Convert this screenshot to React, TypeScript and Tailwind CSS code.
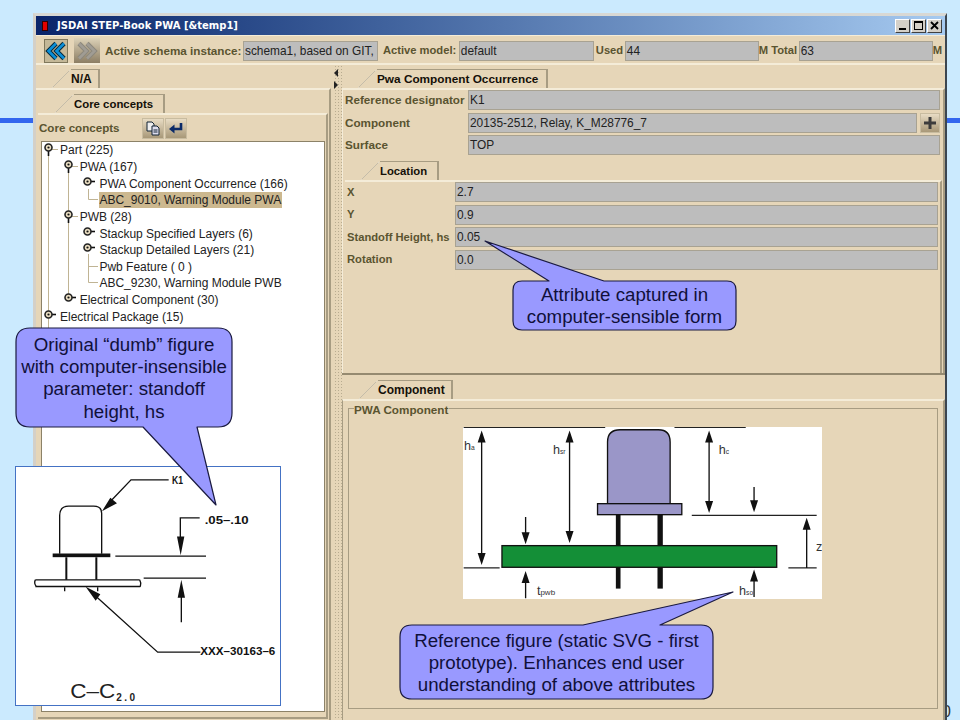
const sans = "font-['Liberation_Sans',Arial,sans-serif]";

const Tab = ({ label, width, className = "", textSize = "text-[12px]" }: { label: string; width: number; className?: string; textSize?: string }) => (
	<div className={`flex h-[19px] ${className}`} style={{ width }}>
		<svg width="19" height="19" viewBox="0 0 19 19" className="shrink-0">
			<polygon points="0,19 18,1 19,1 19,19" fill="#e6d6b8" />
			<line x1="0" y1="19" x2="18" y2="1" stroke="#fbf6ea" strokeWidth="1" />
			<line x1="0.5" y1="18.5" x2="17.5" y2="1.5" stroke="#8c8268" strokeWidth="0.5" />
		</svg>
		<div className={`flex-1 bg-[#e6d6b8] border-t border-t-[#a79c82] border-r-2 border-r-[#a79c82] pt-[1px] ${textSize} leading-[16px] font-bold text-[#141008] whitespace-nowrap`}>
			{label}
		</div>
	</div>
);

const Field = ({ value, className = "" }: { value: string; className?: string }) => (
	<div className={`h-[20px] bg-[#bdbdbd] border border-[#a8a292] pl-[1px] text-[11.9px] leading-[18px] text-[#222] whitespace-nowrap overflow-hidden ${className}`}>
		{value}
	</div>
);

const Label = ({ children, className = "" }: { children: React.ReactNode; className?: string }) => (
	<span className={`font-bold text-[#5a5430] whitespace-nowrap ${className}`}>{children}</span>
);

const NodeIcon = ({ open }: { open: boolean }) => (
	<svg width="16" height="14" viewBox="0 0 16 14" className="shrink-0">
		{open ? <line x1="4.5" y1="8" x2="4.5" y2="13" stroke="#111" strokeWidth="1.6" /> : <line x1="8" y1="4.5" x2="12" y2="4.5" stroke="#111" strokeWidth="1.6" />}
		<circle cx="4.5" cy="4.5" r="3.5" fill="#e8dcc0" stroke="#222" strokeWidth="1.6" />
		<circle cx="4.5" cy="4.5" r="1.1" fill="#111" />
	</svg>
);

const treeRows = [
	{ level: 0, icon: "open", text: "Part (225)" },
	{ level: 1, icon: "open", text: "PWA (167)" },
	{ level: 2, icon: "closed", text: "PWA Component Occurrence (166)" },
	{ level: 2, icon: "", text: "ABC_9010, Warning Module PWA", selected: true },
	{ level: 1, icon: "open", text: "PWB (28)" },
	{ level: 2, icon: "closed", text: "Stackup Specified Layers (6)" },
	{ level: 2, icon: "closed", text: "Stackup Detailed Layers (21)" },
	{ level: 2, icon: "", text: "Pwb Feature ( 0 )" },
	{ level: 2, icon: "", text: "ABC_9230, Warning Module PWB" },
	{ level: 1, icon: "closed", text: "Electrical Component (30)" },
	{ level: 0, icon: "closed", text: "Electrical Package (15)" },
];

const Tree = () => (
	<div className="relative flex-1 bg-white border border-[#8c8268] overflow-hidden">
		<svg className="absolute left-0 top-0" width="100" height="200" viewBox="0 0 100 200">
			<g stroke="#c0b494" strokeWidth="1" fill="none">
				<path d="M6.5 13V200" />
				<path d="M26.5 29V157" />
				<path d="M10 7.5H16M30 24.5H36M30 74.5H36" />
				<path d="M46.5 47V57.5H56" />
				<path d="M46.5 112V140.5H56M46.5 124.5H56" />
			</g>
		</svg>
		{treeRows.map((row) => (
			<div key={row.text} className="relative flex items-center h-[16.65px]" style={{ paddingLeft: 2 + row.level * 19.7 }}>
				{row.icon ? <NodeIcon open={row.icon === "open"} /> : <div className="w-[16px] shrink-0" />}
				<span className={`text-[12px] leading-[16px] text-[#222] whitespace-nowrap ${row.selected ? "bg-[#ccb88f] pr-[1px]" : ""}`}>{row.text}</span>
			</div>
		))}
	</div>
);

const ToolButton = ({ children, className = "" }: { children: React.ReactNode; className?: string }) => (
	<div className={`flex items-center justify-center bg-gradient-to-b from-[#e8dcc4] to-[#a89878] border border-[#c8bca0] ${className}`}>{children}</div>
);

const Chevrons = ({ color, edge, flip }: { color: string; edge: string; flip?: boolean }) => (
	<svg width="22" height="20" viewBox="0 0 22 20" className={flip ? "rotate-180" : ""}>
		<path d="M11 2.5L3.5 10l7.5 7.5M19 2.5L11.5 10l7.5 7.5" fill="none" stroke={edge} strokeWidth="4.6" />
		<path d="M11 2.5L3.5 10l7.5 7.5M19 2.5L11.5 10l7.5 7.5" fill="none" stroke={color} strokeWidth="2.6" />
	</svg>
);

const WinButton = ({ children }: { children: React.ReactNode }) => (
	<div className="w-[15px] h-[14px] flex items-center justify-center bg-[#d4d0c8] border-t border-l border-t-white border-l-white border-b border-r border-b-[#404040] border-r-[#404040]">{children}</div>
);

const ModelFigure = () => (
	<svg width="359" height="172" viewBox="368 170 1078 516" className="block bg-white" fontFamily="Liberation Sans, Arial, sans-serif">
		<g stroke="#222" strokeWidth="4" fill="none">
			<path d="M370 171H795M1003 171H1217M370 593H478M1055 435H1430M1345 593H1430" />
		</g>
		<g stroke="#111" strokeWidth="4" fill="none">
			<path d="M424 190V570M688 190V505M1107 190V415M1242 350V415M1400 593V455M556 440V510M556 684V615M1242 680V610" />
		</g>
		<g fill="#111">
			<path d="M424 180l-12 36h24zM424 584l-12-36h24zM688 180l-12 36h24zM688 518l-12-36h24zM1107 180l-12 36h24zM1107 428l-12-36h24zM1242 426l-12-36h24zM1400 442l-12 36h24zM556 522l-12-36h24zM556 602l-12 36h24zM1242 598l-12 36h24z" />
		</g>
		<rect x="827" y="430" width="14" height="225" fill="#111" />
		<rect x="952" y="430" width="16" height="225" fill="#111" />
		<rect x="485" y="526" width="825" height="65" fill="#148f37" stroke="#111" strokeWidth="4" />
		<path d="M802 400V215Q802 178 840 178H955Q990 178 990 215V400Z" fill="#9a96c8" stroke="#111" strokeWidth="4" />
		<rect x="772" y="400" width="253" height="33" fill="#9a96c8" stroke="#111" strokeWidth="4" />
		<g fill="#333" fontSize="38">
			<text x="371" y="240">h<tspan fontSize="20">a</tspan></text>
			<text x="638" y="251">h<tspan fontSize="20">sr</tspan></text>
			<text x="1136" y="251">h<tspan fontSize="20">c</tspan></text>
			<text x="1428" y="541">z</text>
			<text x="590" y="675">t<tspan fontSize="24">pwb</tspan></text>
			<text x="1197" y="673">h<tspan fontSize="20">so</tspan></text>
		</g>
	</svg>
);

const ScanFigure = () => (
	<svg width="265" height="238" viewBox="47 20 795 713" fontFamily="Liberation Sans, Arial, sans-serif">
		<g stroke="#111" fill="none" strokeWidth="4">
			<path d="M178 280V165Q178 137 205 137H280Q304 137 304 158V280" />
			<path d="M198 290V358M288 290V358" strokeWidth="6" />
			<path d="M105 358H418M105 378H420M105 358Q100 368 108 378M418 358Q424 368 420 378" strokeWidth="4" />
			<path d="M193 380V392M292 380V392" />
			<path d="M505 58H392L325 128" />
			<path d="M598 172H540V240" />
			<path d="M345 287H617M430 353H617" />
			<path d="M543 485V400" />
			<path d="M270 392L472 575H600" />
		</g>
		<rect x="157" y="279" width="173" height="11" fill="#111" />
		<path d="M305 152L330 112l20 16zM541 284l-11-56h22zM543 358l-11 54h22zM256 379l44 22-14 20z" fill="#111" />
		<g fill="#111" fontWeight="bold" fontSize="31">
			<text x="515" y="70" textLength="33" lengthAdjust="spacingAndGlyphs">K1</text>
			<text x="613" y="189" textLength="132" lengthAdjust="spacingAndGlyphs">.05–.10</text>
			<text x="600" y="582" textLength="225" lengthAdjust="spacingAndGlyphs">XXX–30163–6</text>
		</g>
		<text x="210" y="712" fontSize="62" fill="#222" textLength="135" lengthAdjust="spacingAndGlyphs">C–C</text>
		<text x="348" y="720" fontSize="30" fontWeight="bold" fill="#222" textLength="56" lengthAdjust="spacing">2.0</text>
	</svg>
);

const Callouts = () => (
	<svg className="absolute left-0 top-0 pointer-events-none" width="960" height="720" viewBox="0 0 960 720">
		<g fill="#9999ff" stroke="#1a1a40" strokeWidth="1.2" strokeLinejoin="round">
			<path d="M30 328H218Q232 328 232 342V413Q232 427 218 427H197L216 505L143 427H30Q16 427 16 413V342Q16 328 30 328Z" />
			<path d="M522 281H549L485 241L604 281H727Q736 281 736 290V321Q736 330 727 330H522Q513 330 513 321V290Q513 281 522 281Z" />
			<path d="M412 625H583L733 592L660 625H701Q713 625 713 637V687Q713 699 701 699H412Q400 699 400 687V637Q400 625 412 625Z" />
		</g>
	</svg>
);

const CalloutText = ({ lines, className }: { lines: string[]; className: string }) => (
	<div className={`absolute text-center text-[18.7px] leading-[22.2px] text-[#10103a] ${className}`}>
		{lines.map((line) => (
			<div key={line} className="whitespace-nowrap">{line}</div>
		))}
	</div>
);

export default function App() {
	return (
		<div className={`relative w-[960px] h-[720px] overflow-hidden bg-[#cbeafe] pt-[13px] pl-[33px] ${sans}`}>
			<div className="absolute left-0 top-[118px] w-[960px] h-[5px] bg-[#3366ee]" />
			<div className="absolute left-[942px] top-[700px] text-[16px] text-[#333]">0</div>

			<div className="relative w-[914px] h-[707px] flex flex-col bg-[#d4d0c8] border-t-[3px] border-t-[#d8d8d4] border-l-[3px] border-l-[#d4d0c8] border-r-2 border-r-[#3c4650]">
				{/* title bar */}
				<div className="h-[19px] shrink-0 flex items-center bg-gradient-to-r from-[#0a246a] to-[#a6caf0] pl-[6px] pr-[3px]">
					<div className="w-[6px] h-[10px] bg-[#e00000] border border-[#300] mr-[9px]" />
					<span className="flex-1 font-['DejaVu_Sans',sans-serif] text-[10px] font-bold text-white whitespace-nowrap">JSDAI STEP-Book PWA [&amp;temp1]</span>
					<div className="flex gap-[1px]">
						<WinButton><div className="w-[7px] h-[2px] bg-black mt-[7px]" /></WinButton>
						<WinButton><div className="w-[9px] h-[9px] border border-black border-t-2" /></WinButton>
						<WinButton>
							<svg width="9" height="9" viewBox="0 0 9 9"><path d="M1 1l7 7M8 1L1 8" stroke="#000" strokeWidth="1.8" /></svg>
						</WinButton>
					</div>
				</div>

				{/* toolbar */}
				<div className="h-[30px] shrink-0 flex items-center bg-[#e6d6b8] border-t border-t-[#f4ecd8] border-b-2 border-b-[#f4ecd8] pt-[2px] pl-[8px] pr-[3px] text-[11.2px]">
					<div className="w-[24px] h-[24px] flex items-center justify-center bg-[#c4b898] border border-[#80785c] mr-[6px]">
						<Chevrons color="#0a8fd8" edge="#06283c" />
					</div>
					<div className="w-[26px] h-[25px] flex items-center justify-center bg-gradient-to-b from-[#ddd2b8] to-[#8c7e64] mr-[5px]">
						<Chevrons color="#a09c94" edge="#8c887c" flip />
					</div>
					<Label className="w-[138px] text-[11.7px]">Active schema instance:</Label>
					<Field value="schema1, based on GIT," className="w-[135px]" />
					<Label className="w-[81px] pl-[5px]">Active model:</Label>
					<Field value="default" className="w-[135px]" />
					<Label className="w-[31px] pl-[2px]">Used</Label>
					<Field value="44" className="w-[134px]" />
					<Label className="w-[40px]">M Total</Label>
					<Field value="63" className="w-[134px]" />
					<Label>M</Label>
				</div>

				{/* body */}
				<div className="flex-1 flex bg-[#e6d6b8] min-h-0">
					{/* left pane */}
					<div className="w-[295px] flex flex-col pt-[4px]">
						<Tab label="N/A" width={48} className="ml-[16px]" />
						<div className="flex-1 flex flex-col border-t-2 border-t-[#f4ecd8] border-r-2 border-r-[#a79c82] pl-[2px] pr-[1px] pb-[1px] min-h-0">
							<Tab label="Core concepts" width={110} className="ml-[17px] mt-[4px]" textSize="text-[11.4px]" />
							<div className="flex-1 flex flex-col border-t-2 border-t-[#f4ecd8] border-r-2 border-r-[#a79c82] border-b-2 border-b-[#a79c82] pl-[3px] pr-[1px] pb-[5px] min-h-0">
								<div className="h-[26px] flex items-center text-[11.6px]">
									<Label className="w-[103px] -ml-[2px]">Core concepts</Label>
									<ToolButton className="w-[22px] h-[21px]">
										<svg width="16" height="15" viewBox="0 0 16 15">
											<path d="M2 1h5l2 2v7H2z" fill="#eee" stroke="#123" />
											<path d="M7 5h5l2 2v7H7z" fill="#dde" stroke="#123" />
											<path d="M8.5 9h4M8.5 11h4" stroke="#123" />
										</svg>
									</ToolButton>
									<ToolButton className="w-[22px] h-[21px] ml-px">
										<svg width="16" height="15" viewBox="0 0 16 15">
											<path d="M13 2v6H5" fill="none" stroke="#0a2a68" strokeWidth="2.6" />
											<path d="M6.5 3.5L1 8l5.5 4.5z" fill="#0a2a68" />
										</svg>
									</ToolButton>
								</div>
								<Tree />
							</div>
						</div>
					</div>

					{/* splitter */}
					<div className="w-[11px] flex">
						<div className="w-[3px]" />
						<div className="w-[8px] flex flex-col bg-[radial-gradient(#b8ac90_1px,transparent_1px)] bg-[length:3px_3px]">
							<svg width="6" height="26" viewBox="0 0 6 26" className="mt-[2px]">
								<path d="M4 2v8L0 6zM0 14v8l4-4z" fill="#222" />
							</svg>
						</div>
					</div>

					{/* right pane */}
					<div className="flex-1 flex flex-col min-w-0">
						<div className="h-[310px] shrink-0 flex flex-col pt-[4px] border-b-2 border-b-[#958a70]">
							<Tab label="Pwa Component Occurrence" width={190} className="ml-[16px]" textSize="text-[11.8px]" />
							<div className="flex-1 flex flex-col border-t-2 border-t-[#f4ecd8] border-l border-l-[#f4ecd8] border-r-2 border-r-[#a79c82] pl-[2px] pr-[3px] text-[11.7px]">
								<div className="flex items-center gap-[3px] mb-[2.5px]">
									<Label className="w-[120px]">Reference designator</Label>
									<Field value="K1" className="flex-1" />
								</div>
								<div className="flex items-center gap-[3px] mb-[2.5px]">
									<Label className="w-[120px]">Component</Label>
									<Field value="20135-2512, Relay, K_M28776_7" className="flex-1" />
									<ToolButton className="w-[20px] h-[20px]">
										<svg width="14" height="14" viewBox="0 0 14 14"><path d="M7 1v12M1 7h12" stroke="#3c3c3c" strokeWidth="3" /></svg>
									</ToolButton>
								</div>
								<div className="flex items-center gap-[3px]">
									<Label className="w-[120px]">Surface</Label>
									<Field value="TOP" className="flex-1" />
								</div>
								<Tab label="Location" width={78} className="ml-[16px] mt-[6px]" textSize="text-[11.3px]" />
								<div className="flex-1 flex flex-col gap-[2.5px] border-t-2 border-t-[#f4ecd8] border-r-2 border-r-[#a79c82] pl-[2px] pr-[2px] -mr-[2px] text-[11.2px]">
									{[
										["X", "2.7"],
										["Y", "0.9"],
										["Standoff Height, hs", "0.05"],
										["Rotation", "0.0"],
									].map(([name, value]) => (
										<div key={name} className="flex items-center">
											<Label className="w-[108px]">{name}</Label>
											<Field value={value} className="flex-1" />
										</div>
									))}
								</div>
							</div>
						</div>

						<div className="flex-1 flex flex-col pt-[5px] min-h-0">
							<Tab label="Component" width={94} className="ml-[17px]" />
							<div className="flex-1 border-t-2 border-t-[#f4ecd8] border-r-2 border-r-[#a79c82] border-l border-l-[#a79c82] px-[5px] pt-[7px] pb-[11px] min-h-0">
								<div className="relative h-full border border-[#a79c82] pt-[18px] flex justify-center">
									<span className="absolute left-[5px] -top-[5px] bg-[#e6d6b8] pr-px leading-[12px] text-[11.7px]">
										<Label>PWA Component</Label>
									</span>
									<div className="ml-[-1px] h-fit">
										<ModelFigure />
									</div>
								</div>
							</div>
						</div>
					</div>
				</div>
			</div>

			{/* slide annotations over the app window */}
			<div className="absolute left-[15px] top-[466px] w-[266px] h-[240px] bg-white border border-[#4472c4]">
				<ScanFigure />
			</div>
			<Callouts />
			<CalloutText lines={["Original “dumb” figure", "with computer-insensible", "parameter: standoff", "height, hs"]} className="left-[16px] top-[334px] w-[216px]" />
			<CalloutText lines={["Attribute captured in", "computer-sensible form"]} className="left-[513px] top-[284px] w-[223px]" />
			<CalloutText lines={["Reference figure (static SVG - first", "prototype). Enhances end user", "understanding of above attributes"]} className="left-[400px] top-[630px] w-[313px]" />
		</div>
	);
}
